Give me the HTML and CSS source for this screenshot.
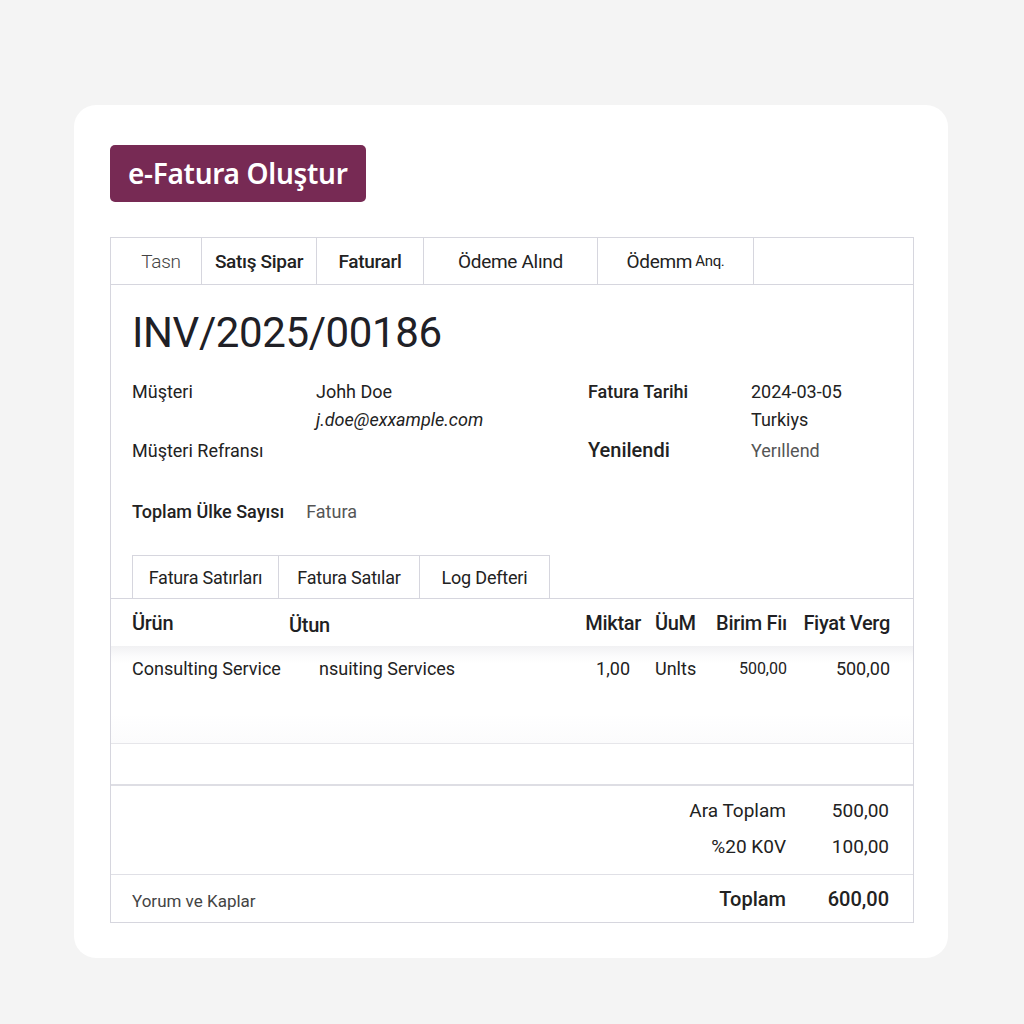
FILE: index.html
```html
<!DOCTYPE html>
<html lang="tr">
<head>
<meta charset="utf-8">
<title>e-Fatura</title>
<link rel="stylesheet" href="styles.css">
</head>
<body>
<div class="card">
  <div class="btn">e-Fatura Oluştur</div>
  <div class="panel">
    <div class="tabs">
      <div class="tab t1 light">Tasn</div>
      <div class="tab t2 strong">Satış Sipar</div>
      <div class="tab t3 strong">Faturarl</div>
      <div class="tab t4">Ödeme Alınd</div>
      <div class="tab t5">Ödemm <span class="small">Anq.</span></div>
      <div class="tab t6"></div>
    </div>
    <div class="body">
      <h1 class="title">INV/2025/00186</h1>
      <div class="fields">
        <div class="lbl">Müşteri</div>
        <div class="val">Johh Doe</div>
        <div class="lbl strong">Fatura Tarihi</div>
        <div class="val">2024-03-05</div>
        <div></div>
        <div class="val email">j.doe@exxample.com</div>
        <div></div>
        <div class="val">Turkiys</div>
        <div class="lbl">Müşteri Refransı</div>
        <div></div>
        <div class="lbl big">Yenilendi</div>
        <div class="val grey">Yerıllend</div>
      </div>
      <div class="total-count">
        <span class="lbl strong">Toplam Ülke Sayısı</span>
        <span class="val grey">Fatura</span>
      </div>
      <div class="subtabs">
        <div class="subtab">Fatura Satırları</div>
        <div class="subtab">Fatura Satılar</div>
        <div class="subtab">Log Defteri</div>
      </div>
    </div>
    <div class="table">
      <div class="row head">
        <div>Ürün</div>
        <div class="ut">Ütun</div>
        <div class="r">Miktar</div>
        <div class="uom">ÜuM</div>
        <div class="r">Birim Fiı</div>
        <div class="r">Fiyat Verg</div>
      </div>
      <div class="line-area">
        <div class="row data">
          <div class="nowrap">Consulting Service</div>
          <div class="desc">nsuiting Services</div>
          <div class="r">1,00</div>
          <div class="uom">Unlts</div>
          <div class="r sm">500,00</div>
          <div class="r">500,00</div>
        </div>
      </div>
      <div class="empty-row"></div>
      <div class="totals">
        <div class="trow"><span class="tl">Ara Toplam</span><span class="tv">500,00</span></div>
        <div class="trow"><span class="tl">%20 K0V</span><span class="tv">100,00</span></div>
      </div>
      <div class="footer">
        <span class="note">Yorum ve Kaplar</span>
        <div class="trow grand"><span class="tl">Toplam</span><span class="tv">600,00</span></div>
      </div>
    </div>
  </div>
</div>
</body>
</html>
```
FILE: styles.css
```css
* { box-sizing: border-box; }
html, body { margin: 0; padding: 0; }
body {
  background: #f4f4f4;
  font-family: Roboto, "Noto Sans", "DejaVu Sans", sans-serif;
  color: #1f1f24;
  width: 1024px;
  height: 1024px;
  padding-top: 105px;
  padding-left: 74px;
}
.card {
  width: 874px;
  height: 853px;
  background: #ffffff;
  border-radius: 22px;
  padding: 40px 35px 0 36px;
}
.btn {
  display: inline-block;
  height: 57px;
  line-height: 56px;
  padding: 0 19px 0 18px;
  background: #772a54;
  color: #fff;
  font-family: "Noto Sans", Roboto, sans-serif;
  font-size: 28px;
  font-weight: 600;
  letter-spacing: -0.3px;
  border-radius: 5px;
}
.panel {
  margin-top: 35px;
  border: 1px solid #d6d6de;
  width: 804px;
  height: 686px;
  display: flex;
  flex-direction: column;
}
.tabs {
  display: flex;
  height: 47px;
  border-bottom: 1px solid #d6d6de;
}
.tab {
  display: flex;
  align-items: center;
  justify-content: center;
  border-right: 1px solid #d6d6de;
  font-size: 19px;
  color: #222;
  letter-spacing: -0.3px;
}
.tab.light { color: #444; font-weight: 300; }
.tab.strong { font-weight: 500; }
.t1 { width: 91px; padding-left: 10px; }
.t2 { width: 115px; }
.t3 { width: 107px; }
.t4 { width: 174px; }
.t5 { width: 156px; }
.t6 { flex: 1; border-right: 0; }
.small { font-size: 15px; margin-left: 3px; }

.body { padding: 0 21px; }
.title {
  margin: 20px 0 0 0;
  font-size: 42px;
  font-weight: 400;
  line-height: 56px;
  letter-spacing: -0.4px;
  color: #202026;
}
.fields {
  margin-top: 15px;
  display: grid;
  grid-template-columns: 184px 272px 163px 1fr;
  grid-template-rows: 30px 27px 34px;
  font-size: 18px;
  align-items: center;
}
.lbl { color: #222; }
.strong { font-weight: 500; }
.big { font-size: 20px; font-weight: 500; }
.val { color: #222; }
.email { font-style: italic; }
.grey { color: #555; }
.total-count {
  margin-top: 30px;
  display: flex;
  gap: 22px;
  font-size: 18px;
  align-items: center;
  height: 28px;
}
.total-count .strong { font-weight: 500; }
.subtabs {
  margin-top: 30px;
  display: flex;
  height: 43px;
}
.subtab {
  display: flex;
  align-items: center;
  justify-content: center;
  border: 1px solid #d6d6de;
  border-bottom: 0;
  border-right: 0;
  font-size: 18px;
  color: #222;
  letter-spacing: -0.2px;
}
.subtab:nth-child(1) { width: 146px; }
.subtab:nth-child(2) { width: 141px; }
.subtab:nth-child(3) { width: 131px; border-right: 1px solid #d6d6de; }

.table {
  border-top: 1px solid #d6d6de;
  flex: 1;
  display: flex;
  flex-direction: column;
}
.row {
  display: grid;
  grid-template-columns: 157px 290px 62px 60px 86px 103px;
  padding: 0 24px 0 21px;
  align-items: center;
}
.row.head {
  height: 47px;
  font-size: 20px;
  font-weight: 500;
  letter-spacing: -0.3px;
}
.ut { padding-top: 4px; }
.r { text-align: right; }
.uom { padding-left: 14px; }
.line-area {
  height: 98px;
  background: linear-gradient(to bottom, #f1f1f3 0px, #fbfbfc 10px, #ffffff 18px, #ffffff 70%, #fbfbfc 100%);
  border-bottom: 1px solid #e6e6ea;
}
.row.data {
  height: 44px;
  font-size: 18px;
  color: #222;
}
.row.data .r:nth-child(3) { padding-right: 11px; }
.nowrap { white-space: nowrap; }
.desc { padding-left: 30px; white-space: nowrap; }
.sm { font-size: 16px; }
.empty-row {
  height: 42px;
  border-bottom: 2px solid #dedee4;
}
.totals {
  height: 89px;
  border-bottom: 1px solid #e0e0e6;
  padding: 6px 24px 0 0;
  display: flex;
  flex-direction: column;
  align-items: flex-end;
}
.trow {
  display: flex;
  height: 36px;
  align-items: center;
  font-size: 19px;
  color: #222;
}
.tl { text-align: right; }
.tv { width: 103px; text-align: right; }
.footer {
  flex: 1;
  display: flex;
  justify-content: space-between;
  align-items: center;
  padding: 0 24px 0 21px;
}
.note { font-size: 17px; color: #444; padding-top: 4px; }
.grand { font-size: 20px; font-weight: 500; }
```
